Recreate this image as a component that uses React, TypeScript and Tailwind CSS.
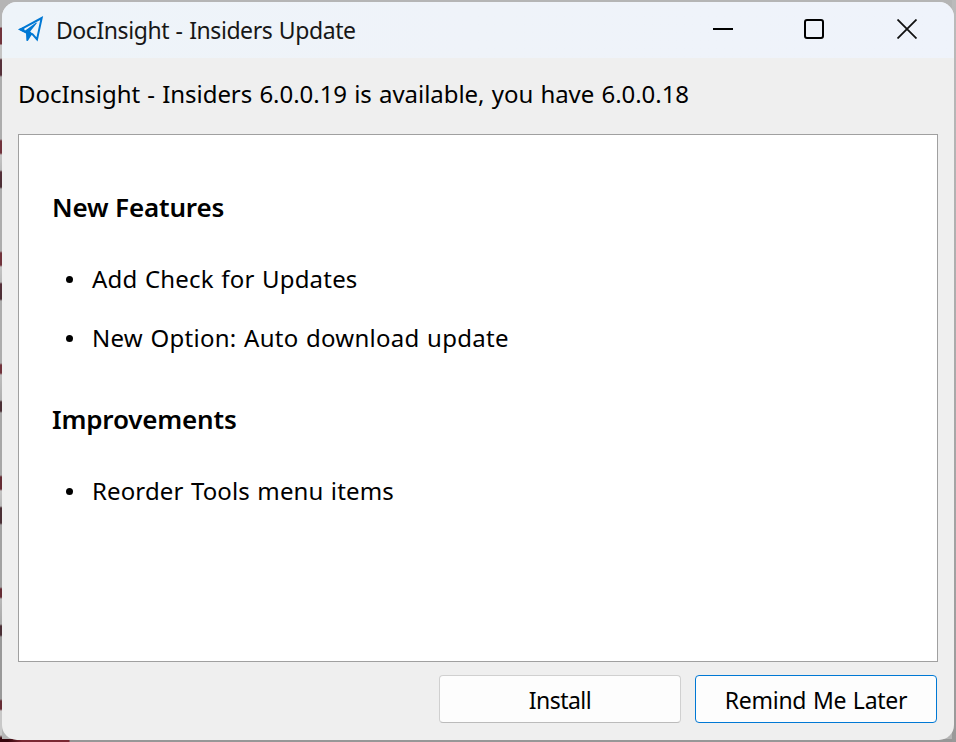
function PlaneIcon() {
  return (
    <svg width="26" height="26" viewBox="0 0 26 26" fill="none" className="block shrink-0">
      <path d="M8.6 16.2 5.5 14.8 2.5 13.4 23.7 2 19 23.4 14 17.6" stroke="#0078d4" strokeWidth="2" />
      <path d="M0 13.2 6 11 6.6 15 17.4 7 19.4 6.6 12.2 15.4 15.4 18.6 13.4 19.2 9.8 25 8.4 24.8 8 17.6 4 15.6Z" fill="#0078d4" />
    </svg>
  );
}

function TitleBar() {
  return (
    <header className="flex h-[56px] shrink-0 items-start bg-gradient-to-r from-[#eef4f9] via-[#eff3f9] to-[#eff3fb] pl-[16px]">
      <div className="pt-[14px]"><PlaneIcon /></div>
      <h1 className="ml-[12px] mt-[10px] flex-1 text-[23px] leading-[36px] tracking-[-0.43px] text-[#171717] [word-spacing:1px]">DocInsight - Insiders Update</h1>
      <div className="mr-[37px] mt-[17px] flex">
        <svg width="20" height="20" className="mr-[71px] block"><path d="M0 10h20" stroke="#000" strokeWidth="2" /></svg>
        <svg width="20" height="20" className="mr-[73px] block"><rect x="1" y="1" width="18" height="18" rx="2" fill="none" stroke="#000" strokeWidth="2" /></svg>
        <svg width="20" height="20" className="block"><path d="M.5.5l19 19M19.5.5l-19 19" stroke="#111" strokeWidth="1.8" /></svg>
      </div>
    </header>
  );
}

function Item({ children, className }: { children: string; className: string }) {
  return (
    <li className={"flex h-[59px] items-start text-[24px] leading-[36px] " + className}>
      <span className="ml-[14px] mr-[19px] mt-[15px] h-[7px] w-[7px] shrink-0 rounded-full bg-black" />
      <span>{children}</span>
    </li>
  );
}

export default function App() {
  return (
    <div className="h-[742px] w-[956px] overflow-hidden bg-[#b5b5b5] bg-[linear-gradient(#b5b5b5_27px,#71333c_28px,#71333c_44px,#c4c4c4_45px,#c4c4c4_58px,#56303a_60px,#56303a_75px,#adadad_77px,#adadad_139px,#71333c_141px,#71333c_153px,#c4c4c4_155px,#b8b8b8_170px,#56303a_172px,#4b3036_187px,#adadad_189px,#adadad_251px,#71333c_253px,#71333c_265px,#c4c4c4_267px,#b8b8b8_282px,#56303a_284px,#4b3036_299px,#adadad_301px,#adadad_363px,#71333c_365px,#71333c_373px,#bcbcbc_375px,#b0b0b0_400px,#4b3036_402px,#4b3036_411px,#a7a7a7_413px,#a7a7a7_475px,#662d35_477px,#662d35_489px,#c4c4c4_491px,#b8b8b8_506px,#4b3036_508px,#4b3036_523px,#a2a2a2_525px,#a2a2a2_587px,#662d35_589px,#662d35_597px,#b8b8b8_599px,#aaa_624px,#4b3036_626px,#4b3036_635px,#999_637px,#999_699px,#662d35_701px,#662d35_709px,#c8c8c8_711px,#c8c8c8_735px,#34060c_738px)] bg-[length:2px_742px] bg-no-repeat font-['Noto_Sans',sans-serif]">
      <div className="h-full w-full bg-[linear-gradient(90deg,#35060c_8px,#7a2933_22px,#7a2933_69px,#979797_70px)] bg-[length:956px_3px] bg-bottom bg-no-repeat">
        <div className="h-full w-full bg-[linear-gradient(#bbb,#999)] bg-[length:4px_742px] bg-right bg-no-repeat pb-[3px] pl-[2px] pr-[2px] pt-[2px]">
          <main className="flex h-[738px] w-[952px] flex-col overflow-hidden rounded-[15px] bg-[#efefef] text-black">
            <TitleBar />
            <p className="ml-[16px] mt-[18px] h-[58px] shrink-0 whitespace-nowrap text-[24px] leading-[36px] tracking-[-0.04px] [word-spacing:1px]">
              <span>DocInsight - Insiders 6.0.0.19 is available, you have 6.0.0.18</span>
            </p>
            <section className="mx-[16px] h-[528px] shrink-0 border border-[#a0a0a0] bg-white pl-[33px] pt-[54px]">
              <h2 className="h-[72px] text-[26px] font-semibold leading-[36px] tracking-[-0.15px]"><span>New Features</span></h2>
              <ul>
                <Item className="tracking-[0.2px] [word-spacing:1px]">Add Check for Updates</Item>
                <Item className="tracking-[0.27px] [word-spacing:1px]">New Option: Auto download update</Item>
              </ul>
              <h2 className="mt-[22px] h-[72px] text-[26px] font-semibold leading-[36px] tracking-[-0.18px]"><span>Improvements</span></h2>
              <ul>
                <Item className="tracking-[0.13px] [word-spacing:1px]">Reorder Tools menu items</Item>
              </ul>
            </section>
            <footer className="mr-[17px] mt-[13px] flex justify-end gap-[14px]">
              <button className="h-[48px] w-[242px] rounded-[4px] border border-[#d0d0d0] border-b-[#bbb] bg-[#fdfdfd] pt-[1px] text-[23px] leading-[36px] tracking-[-0.55px]"><span>Install</span></button>
              <button className="h-[48px] w-[242px] rounded-[4px] border border-[#0078d4] bg-[#fdfdfd] pt-[1px] text-[23px] leading-[36px] tracking-[-0.28px] [word-spacing:1px]"><span>Remind Me Later</span></button>
            </footer>
          </main>
        </div>
      </div>
    </div>
  );
}
